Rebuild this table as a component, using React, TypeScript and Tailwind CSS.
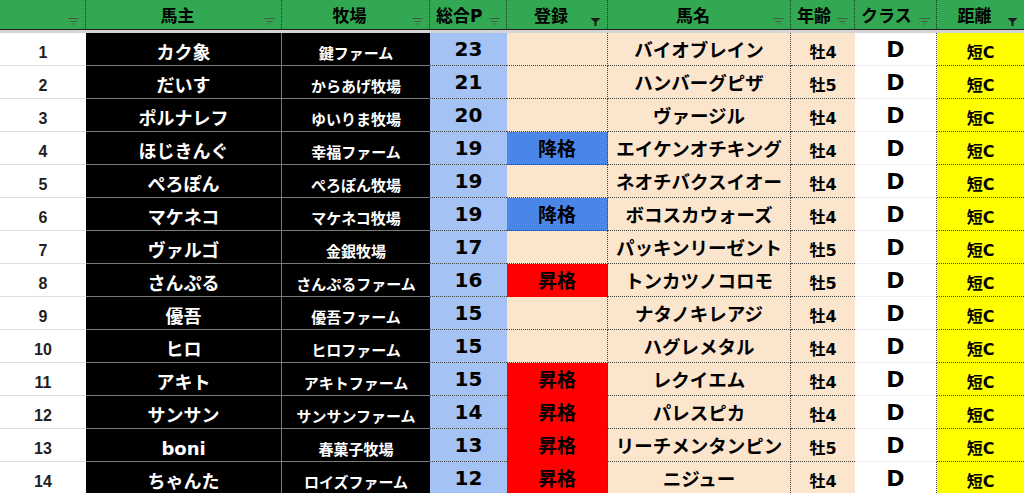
import React from "react";

type Row = {
  no: number;
  owner: string;
  farm: string;
  pt: number;
  reg: "" | "降格" | "昇格";
  horse: string;
  age: string;
};

const rows: Row[] = [
  { no: 1, owner: "カク象", farm: "鍵ファーム", pt: 23, reg: "", horse: "バイオブレイン", age: "牡4" },
  { no: 2, owner: "だいす", farm: "からあげ牧場", pt: 21, reg: "", horse: "ハンバーグピザ", age: "牡5" },
  { no: 3, owner: "ポルナレフ", farm: "ゆいりま牧場", pt: 20, reg: "", horse: "ヴァージル", age: "牡4" },
  { no: 4, owner: "ほじきんぐ", farm: "幸福ファーム", pt: 19, reg: "降格", horse: "エイケンオチキング", age: "牡4" },
  { no: 5, owner: "ぺろぽん", farm: "ぺろぽん牧場", pt: 19, reg: "", horse: "ネオチバクスイオー", age: "牡4" },
  { no: 6, owner: "マケネコ", farm: "マケネコ牧場", pt: 19, reg: "降格", horse: "ボコスカウォーズ", age: "牡4" },
  { no: 7, owner: "ヴァルゴ", farm: "金銀牧場", pt: 17, reg: "", horse: "パッキンリーゼント", age: "牡5" },
  { no: 8, owner: "さんぷる", farm: "さんぷるファーム", pt: 16, reg: "昇格", horse: "トンカツノコロモ", age: "牡5" },
  { no: 9, owner: "優吾", farm: "優吾ファーム", pt: 15, reg: "", horse: "ナタノキレアジ", age: "牡4" },
  { no: 10, owner: "ヒロ", farm: "ヒロファーム", pt: 15, reg: "", horse: "ハグレメタル", age: "牡4" },
  { no: 11, owner: "アキト", farm: "アキトファーム", pt: 15, reg: "昇格", horse: "レクイエム", age: "牡4" },
  { no: 12, owner: "サンサン", farm: "サンサンファーム", pt: 14, reg: "昇格", horse: "パレスピカ", age: "牡4" },
  { no: 13, owner: "boni", farm: "春菓子牧場", pt: 13, reg: "昇格", horse: "リーチメンタンピン", age: "牡5" },
  { no: 14, owner: "ちゃんた", farm: "ロイズファーム", pt: 12, reg: "昇格", horse: "ニジュー", age: "牡4" },
];

const cols = "grid-cols-[86px_196px_148px_77px_101px_183px_64px_82px_87px]";
const jp = { fontFamily: '"DejaVu Sans", "Noto Sans CJK JP", sans-serif' };

function FilterIcon({ active = false }: { active?: boolean }) {
  if (active) {
    return (
      <svg width="11" height="10" viewBox="0 0 11 10" className="shrink-0">
        <path d="M0.5 1 H10.5 L6.5 5 V9 H4.5 V5 Z" fill="#1a1a1a" />
      </svg>
    );
  }
  return (
    <svg width="11" height="8" viewBox="0 0 11 8" className="shrink-0">
      <path d="M0 1.5 H11 M2.5 4.5 H8.5 M4.5 7 H6.5" stroke="#4a5a4a" strokeWidth="1" />
    </svg>
  );
}

function Head({ label, active, last, align = "center" }: { label: string; active?: boolean; last?: boolean; align?: "center" | "left" }) {
  return (
    <div
      className={`relative flex items-center h-full pr-3 pt-1 ${align === "left" ? "pl-1.5" : "justify-center"} ${last ? "" : "border-r border-dotted border-r-[#1b3d22]"}`}
    >
      <span className="text-[17px] font-bold text-black leading-none" style={jp}>
        {label}
      </span>
      <span className="absolute right-1.5 top-[17px]">
        <FilterIcon active={active} />
      </span>
    </div>
  );
}

export default function App() {
  return (
    <div className="w-[1024px] h-[493px] overflow-hidden bg-white" style={jp}>
      <div className={`grid ${cols} h-[29px] bg-[#33a852]`}>
        <Head label="" />
        <Head label="馬主" />
        <Head label="牧場" />
        <Head label="総合P" align="left" />
        <Head label="登録" active />
        <Head label="馬名" />
        <Head label="年齢" align="left" />
        <Head label="クラス" align="left" />
        <Head label="距離" active last />
      </div>
      <div className="h-px bg-[#222]" />
      <div className="h-[3px] bg-[#d4d4d4]" />

      {rows.map((r) => (
        <div key={r.no} className={`grid ${cols} grid-rows-[33px] h-[33px] overflow-hidden`}>
          <div className="flex items-center justify-center bg-white border-b border-[#e0e0e0]">
            <span
              className="text-[16px] leading-none font-bold text-[#1f1f1f] translate-y-[4px]"
              style={{ fontFamily: '"Liberation Sans", Arial, sans-serif' }}
            >
              {r.no}
            </span>
          </div>
          <div className="flex items-center justify-center bg-black border-b border-r border-[#7a7a7a]">
            <span className="text-[18px] leading-none font-bold text-white translate-y-[4px]">{r.owner}</span>
          </div>
          <div className="flex items-center justify-center bg-black border-b border-[#7a7a7a]">
            <span className="text-[15px] leading-none font-bold text-white translate-y-[5px]">{r.farm}</span>
          </div>
          <div className="flex items-center justify-center bg-[#a4c2f4] border-b border-dotted border-[#444]">
            <span className="text-[20px] leading-none font-bold text-black">{r.pt}</span>
          </div>
          <div
            className={`flex items-center justify-center border-b border-r border-dotted border-[#444] ${
              r.reg === "降格" ? "bg-[#4a86e8]" : r.reg === "昇格" ? "bg-[#ff0000]" : "bg-[#fce5cd]"
            }`}
          >
            <span className="text-[19px] leading-none font-bold text-black translate-y-px">{r.reg}</span>
          </div>
          <div className="flex items-center justify-center bg-[#fce5cd] border-b border-r border-dotted border-[#444] overflow-hidden">
            <span className="text-[18.5px] leading-none font-bold text-black whitespace-nowrap translate-y-[2px]">{r.horse}</span>
          </div>
          <div className="flex items-center justify-center bg-[#fce5cd] border-b border-dotted border-[#444]">
            <span className="text-[16px] leading-none font-bold text-black translate-y-[4px]">{r.age}</span>
          </div>
          <div className="flex items-center justify-center bg-white border-b border-r border-b-[#e0e0e0] border-r-[#444] border-dotted">
            <span className="text-[22px] leading-none font-bold text-black translate-y-px">D</span>
          </div>
          <div className="flex items-center justify-center bg-[#ffff00] border-b border-dotted border-[#444]">
            <span className="text-[16px] leading-none font-bold text-black translate-y-[4px]">短C</span>
          </div>
        </div>
      ))}
    </div>
  );
}
